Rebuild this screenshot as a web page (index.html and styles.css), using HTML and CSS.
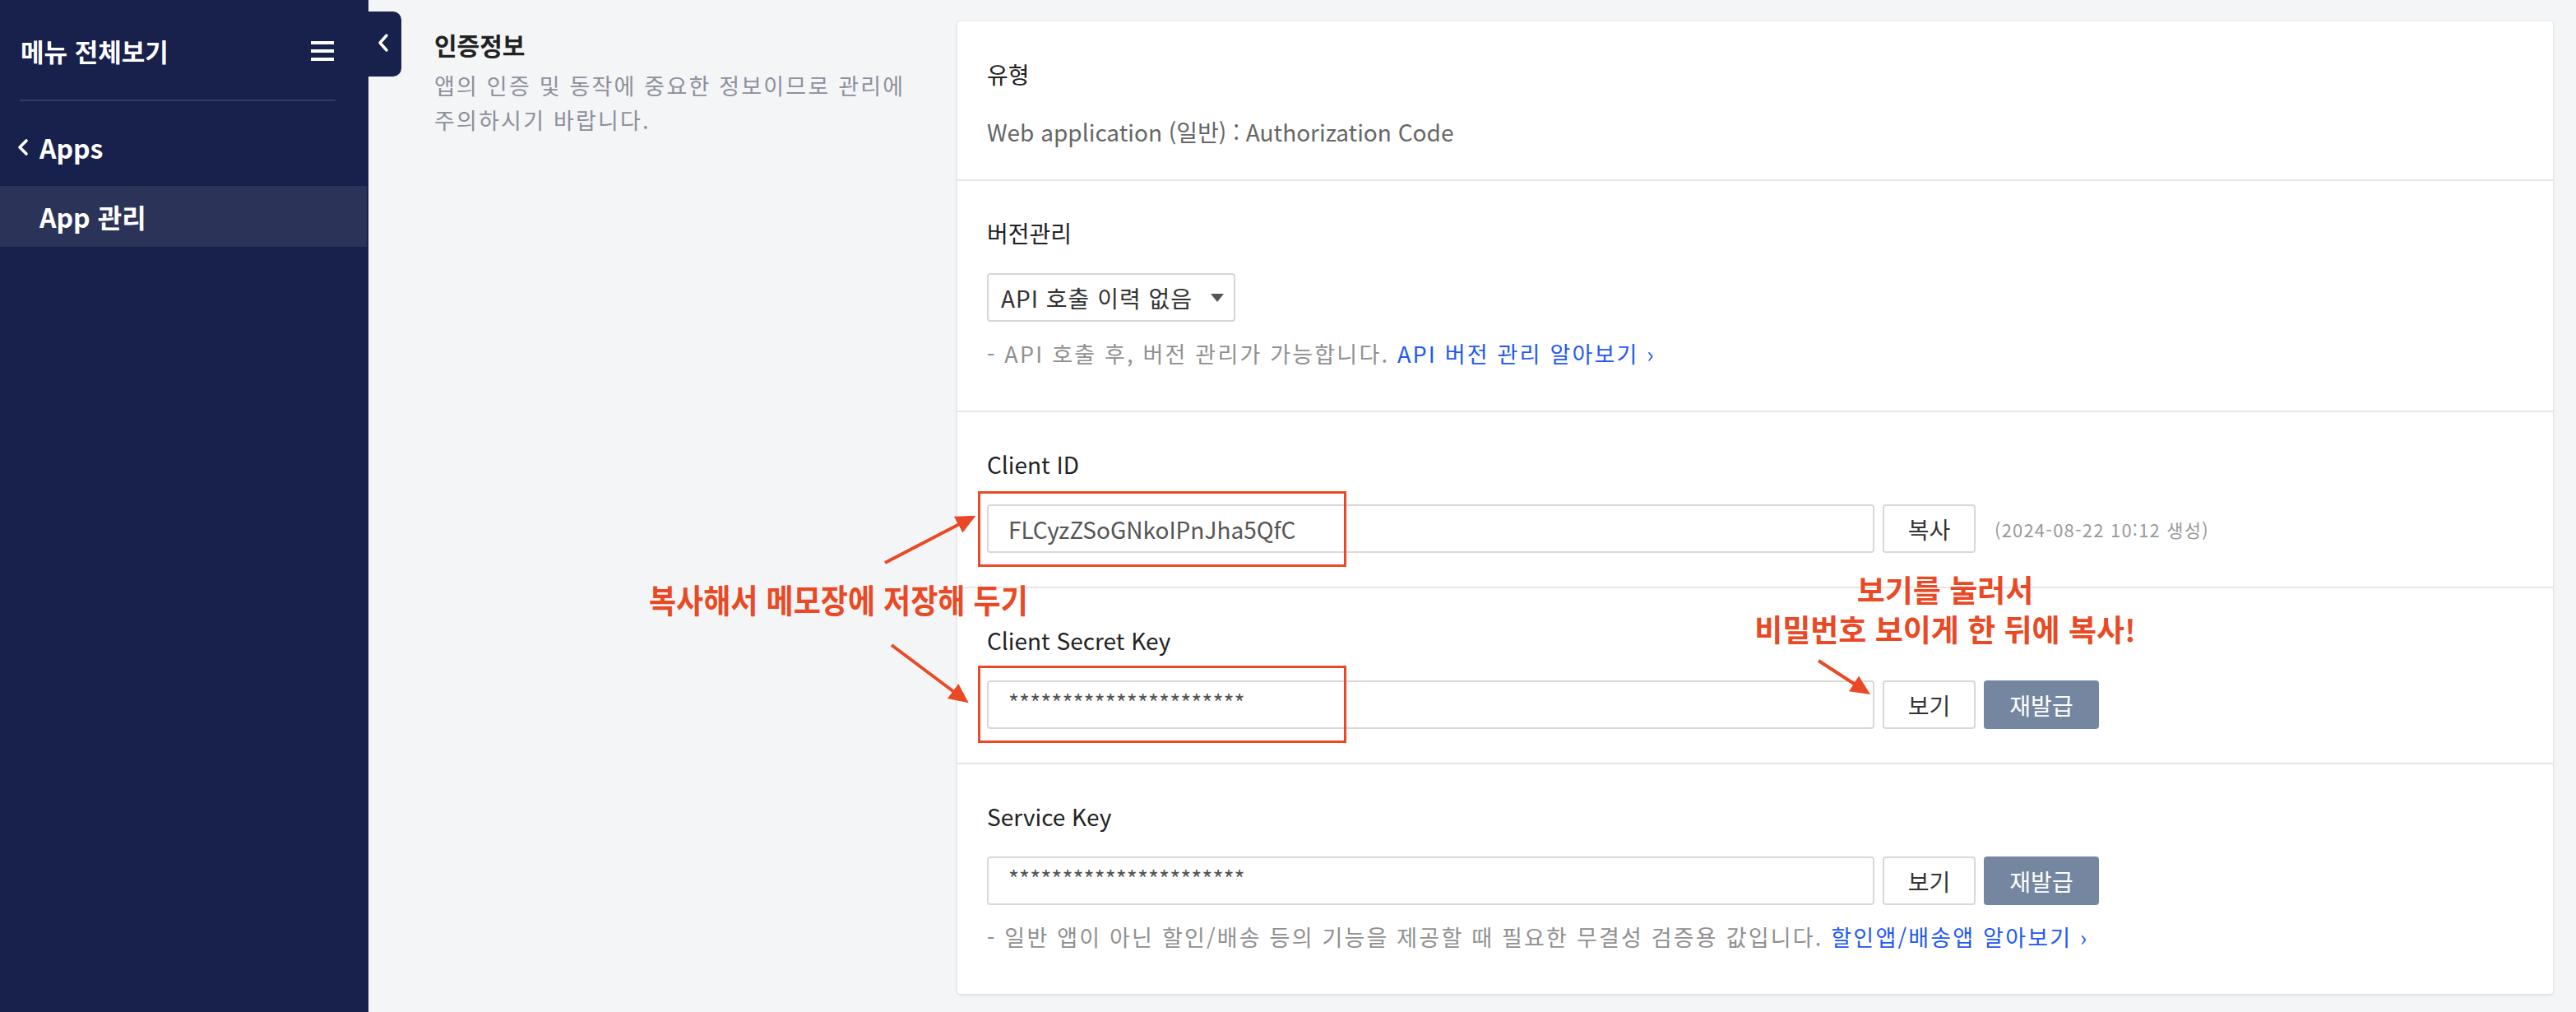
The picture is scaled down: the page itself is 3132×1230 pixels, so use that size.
FILE: index.html
```html
<!DOCTYPE html>
<html lang="ko">
<head>
<meta charset="utf-8">
<title>App 관리 - 인증정보</title>
<link rel="stylesheet" href="styles.css">
</head>
<body>
<div class="page">
  <aside class="sidebar">
    <div class="side-head">
      <span class="side-title">메뉴 전체보기</span>
      <svg class="hamburger" width="28" height="24" viewBox="0 0 28 24"><rect x="0" y="0" width="28" height="4" fill="#fff"/><rect x="0" y="10" width="28" height="4" fill="#fff"/><rect x="0" y="20" width="28" height="4" fill="#fff"/></svg>
    </div>
    <div class="side-back">
      <svg width="16" height="22" viewBox="0 0 16 22"><polyline points="12,3 4,11 12,19" fill="none" stroke="#fff" stroke-width="3.6" stroke-linecap="round" stroke-linejoin="round"/></svg>
      <span>Apps</span>
    </div>
    <div class="side-item active">App 관리</div>
  </aside>
  <div class="collapse-tab">
    <svg width="16" height="24" viewBox="0 0 16 24"><polyline points="12,3 4,12 12,21" fill="none" stroke="#fff" stroke-width="3.4" stroke-linecap="round" stroke-linejoin="round"/></svg>
  </div>

  <main class="main">
    <div class="intro">
      <h2 class="intro-title">인증정보</h2>
      <p class="intro-desc">앱의 인증 및 동작에 중요한 정보이므로 관리에 주의하시기 바랍니다.</p>
    </div>

    <section class="card">
      <div class="row first">
        <div class="label">유형</div>
        <div class="value">Web application (일반) : Authorization Code</div>
      </div>

      <div class="row">
        <div class="label">버전관리</div>
        <div class="select">
          <span>API 호출 이력 없음</span>
          <svg class="caret" width="16" height="10" viewBox="0 0 16 10"><polygon points="0,0 16,0 8,10" fill="#555"/></svg>
        </div>
        <p class="help">- API 호출 후, 버전 관리가 가능합니다. <a class="link">API 버전 관리 알아보기 ›</a></p>
      </div>

      <div class="row">
        <div class="label">Client ID</div>
        <div class="field-row">
          <div class="field">FLCyzZSoGNkoIPnJha5QfC</div>
          <button class="btn">복사</button>
          <span class="date">(2024-08-22 10:12 생성)</span>
        </div>
      </div>

      <div class="row">
        <div class="label">Client Secret Key</div>
        <div class="field-row">
          <div class="field stars">**********************</div>
          <button class="btn">보기</button>
          <button class="btn primary">재발급</button>
        </div>
      </div>

      <div class="row">
        <div class="label">Service Key</div>
        <div class="field-row">
          <div class="field stars">**********************</div>
          <button class="btn">보기</button>
          <button class="btn primary">재발급</button>
        </div>
        <p class="help">- 일반 앱이 아닌 할인/배송 등의 기능을 제공할 때 필요한 무결성 검증용 값입니다. <a class="link">할인앱/배송앱 알아보기 ›</a></p>
      </div>
    </section>
  </main>

  <svg class="annot-layer" width="3132" height="1230" viewBox="0 0 3132 1230">
    <defs>
      <marker id="ah" markerWidth="6" markerHeight="6" refX="4.2" refY="3" orient="auto" markerUnits="strokeWidth">
        <polygon points="0,0.2 6,3 0,5.8" fill="#e94a25"/>
      </marker>
    </defs>
    <rect x="1190.5" y="598.5" width="445" height="89" fill="none" stroke="#e94a25" stroke-width="3"/>
    <rect x="1190.5" y="810.5" width="445" height="91" fill="none" stroke="#e94a25" stroke-width="3"/>
    <line x1="1076" y1="684" x2="1180" y2="630" stroke="#e94a25" stroke-width="4" marker-end="url(#ah)"/>
    <line x1="1084" y1="784" x2="1172" y2="850" stroke="#e94a25" stroke-width="4" marker-end="url(#ah)"/>
    <line x1="2211" y1="803" x2="2268" y2="840" stroke="#e94a25" stroke-width="4" marker-end="url(#ah)"/>
  </svg>
  <div class="note note-copy">복사해서 메모장에 저장해 두기</div>
  <div class="note note-view">보기를 눌러서<br>비밀번호 보이게 한 뒤에 복사!</div>
</div>
</body>
</html>
```

FILE: styles.css
```css
* { box-sizing: border-box; }

html, body {
  margin: 0;
  padding: 0;
}

body {
  width: 3132px;
  height: 1230px;
  overflow: hidden;
  background: #f4f5f7;
  font-family: "Noto Sans CJK KR", "Noto Sans", sans-serif;
  color: #222;
}

.page {
  position: relative;
  display: flex;
  width: 3132px;
  height: 1230px;
}

/* Sidebar */
.sidebar {
  width: 448px;
  flex: 0 0 448px;
  height: 1230px;
  background: #18204c;
  color: #fff;
  display: flex;
  flex-direction: column;
}

.side-head {
  height: 123px;
  margin: 0 40px 0 24px;
  padding-top: 2px;
  border-bottom: 2px solid #333b66;
  display: flex;
  align-items: center;
  justify-content: space-between;
}

.side-title {
  font-size: 31px;
  font-weight: 700;
  line-height: 42px;
  padding-left: 1px;
}

.hamburger { margin-right: 2px; }

.side-back {
  height: 103px;
  padding: 8px 0 0 20px;
  display: flex;
  align-items: center;
  gap: 12px;
  font-size: 32px;
  font-weight: 700;
}

.side-item {
  height: 74px;
  margin-right: 2px;
  padding-left: 48px;
  display: flex;
  align-items: center;
  font-size: 32px;
  font-weight: 700;
}

.side-item.active {
  background: #2b3358;
}

.collapse-tab {
  position: absolute;
  left: 448px;
  top: 14px;
  width: 40px;
  height: 79px;
  background: #18204c;
  border-radius: 0 10px 10px 0;
  display: flex;
  align-items: center;
  padding-left: 10px;
  padding-bottom: 4px;
}

/* Main */
.main {
  flex: 1;
  display: flex;
  align-items: flex-start;
  padding: 26px 28px 0 80px;
}

.intro {
  width: 636px;
  flex: 0 0 636px;
}

.intro-title {
  margin: 7px 0 0;
  font-size: 30px;
  line-height: 42px;
  font-weight: 700;
  color: #222;
}

.intro-desc {
  margin: 8px 0 0;
  width: 600px;
  font-size: 27px;
  letter-spacing: 2.2px;
  line-height: 42px;
  color: #8d8f9c;
}

.card {
  flex: 1;
  background: #fff;
  border-radius: 4px;
  box-shadow: 0 1px 4px rgba(0, 0, 0, 0.12), 0 0 1px rgba(0, 0, 0, 0.1);
}

.row {
  padding: 42px 36px 41px;
  border-top: 2px solid #e6e6e6;
}

.row.first {
  border-top: none;
  padding-top: 43px;
  padding-bottom: 40px;
}

.label {
  font-size: 28px;
  line-height: 42px;
  color: #222;
}

.value {
  margin-top: 31px;
  font-size: 28px;
  line-height: 36px;
  color: #666;
}

.select {
  margin-top: 28px;
  width: 302px;
  height: 59px;
  border: 2px solid #d6d6d6;
  border-radius: 4px;
  display: flex;
  align-items: center;
  padding-left: 15px;
  font-size: 28px;
  letter-spacing: 1px;
  color: #333;
}

.caret { margin-left: 22px; }

.help {
  margin: 18px 0 7px;
  font-size: 27px;
  letter-spacing: 2.2px;
  line-height: 42px;
  color: #909090;
}

.link {
  color: #2158f5;
  text-decoration: none;
}

.field-row {
  margin-top: 28px;
  display: flex;
  align-items: center;
}

.field {
  width: 1079px;
  height: 59px;
  border: 2px solid #d8d8d8;
  border-radius: 4px;
  padding-left: 24px;
  display: flex;
  align-items: center;
  font-size: 28px;
  color: #555;
}

.field.stars {
  padding-bottom: 8px;
}

.btn {
  height: 59px;
  width: 113px;
  margin-left: 10px;
  border: 2px solid #d8d8d8;
  border-radius: 4px;
  background: #fff;
  font-family: "Noto Sans CJK KR", "Noto Sans", sans-serif;
  font-size: 28px;
  color: #333;
  padding: 0;
}

.btn.primary {
  width: 140px;
  border: none;
  background: #7586a1;
  color: #fff;
}

.date {
  margin-left: 23px;
  font-size: 22px;
  letter-spacing: 1.2px;
  color: #9a9a9a;
}

/* Annotations */
.annot-layer {
  position: absolute;
  left: 0;
  top: 0;
  pointer-events: none;
}

.note {
  position: absolute;
  color: #e94a25;
  font-weight: 700;
  white-space: nowrap;
}

.note-copy {
  left: 789px;
  top: 708px;
  font-size: 40px;
  line-height: 40px;
  transform: scaleX(0.9);
  transform-origin: left top;
}

.note-view {
  left: 2065px;
  top: 692px;
  width: 600px;
  text-align: center;
  font-size: 37px;
  line-height: 48px;
}
```
